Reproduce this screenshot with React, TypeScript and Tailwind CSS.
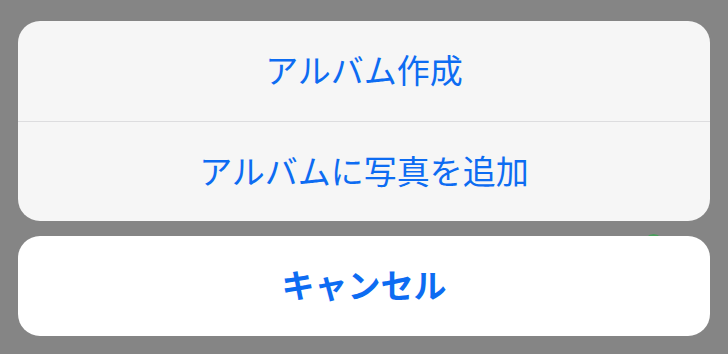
export default function App() {
  const font = { fontFamily: '"Noto Sans CJK JP", "Noto Sans", sans-serif' };
  return (
    <div
      className="relative w-[728px] h-[354px] bg-[#858585] flex flex-col px-[18px] pt-[21px] pb-[18px] gap-[15px]"
      style={font}
    >
      {/* bit of the page underneath peeking out */}
      <div className="absolute left-[644px] top-[234px] w-[19px] h-[19px] rounded-full bg-[#4a9e5c]" />

      <div className="relative flex flex-col rounded-[22px] bg-[#f6f6f6] overflow-hidden">
        <button className="h-[100px] pb-[3px] flex items-center justify-center text-[33px] text-[#0d6cf2] leading-none">
          アルバム作成
        </button>
        <div className="h-px bg-[#dddddf]" />
        <button className="h-[99px] pb-[3px] flex items-center justify-center text-[33px] text-[#0d6cf2] leading-none">
          アルバムに写真を追加
        </button>
      </div>

      <button className="relative h-[100px] pb-[3px] rounded-[22px] bg-white flex items-center justify-center text-[33px] font-bold text-[#0d6cf2] leading-none">
        キャンセル
      </button>
    </div>
  );
}
